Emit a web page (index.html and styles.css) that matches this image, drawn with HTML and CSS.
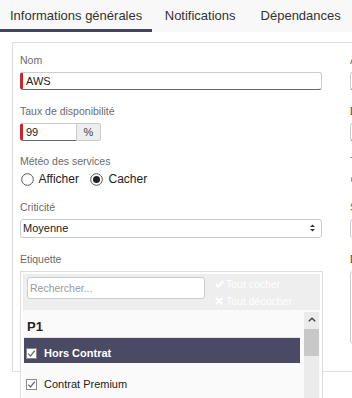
FILE: index.html
```html
<!DOCTYPE html>
<html lang="fr">
<head>
    <meta charset="UTF-8">
    <meta name="viewport" content="width=device-width, initial-scale=1.0">
    <title>Service - Informations générales</title>
    <link rel="stylesheet" href="styles.css">
</head>
<body>
    <div class="tabs">
        <a class="tab active">Informations générales</a>
        <a class="tab">Notifications</a>
        <a class="tab">Dépendances</a>
    </div>

    <div class="content">
        <div class="panel">
            <div class="col">
                <div class="field">
                    <label class="field-label">Nom</label>
                    <input type="text" class="input required" value="AWS">
                </div>
                <div class="field">
                    <label class="field-label">Taux de disponibilité</label>
                    <div class="input-group">
                        <input type="text" class="input required short" value="99">
                        <span class="addon">%</span>
                    </div>
                </div>
                <div class="field">
                    <label class="field-label">Météo des services</label>
                    <div class="radios">
                        <span class="radio">
                            <svg width="13" height="13" viewBox="0 0 13 13"><circle cx="6.5" cy="6.5" r="5.8" fill="#fff" stroke="#555" stroke-width="1"/></svg>
                            Afficher
                        </span>
                        <span class="radio">
                            <svg width="13" height="13" viewBox="0 0 13 13"><circle cx="6.5" cy="6.5" r="5.8" fill="#fff" stroke="#555" stroke-width="1"/><circle cx="6.5" cy="6.5" r="3.5" fill="#222"/></svg>
                            Cacher
                        </span>
                    </div>
                </div>
                <div class="field">
                    <label class="field-label">Criticité</label>
                    <div class="select">
                        <span>Moyenne</span>
                        <svg width="5" height="8" viewBox="0 0 5 8"><polygon points="0,3 2.5,0.5 5,3" fill="#333"/><polygon points="0,5 2.5,7.5 5,5" fill="#333"/></svg>
                    </div>
                </div>
                <div class="field last">
                    <label class="field-label">Etiquette</label>
                    <div class="multiselect">
                        <div class="ms-drop">
                            <div class="ms-header">
                                <input type="text" class="ms-search" placeholder="Rechercher...">
                                <div class="ms-actions">
                                    <span class="ms-action">
                                        <svg width="9" height="8" viewBox="0 0 9 8"><path d="M0.8 4.2 L3.2 6.6 L8.3 1" fill="none" stroke="#fff" stroke-width="2"/></svg>
                                        Tout cocher
                                    </span>
                                    <span class="ms-action">
                                        <svg width="9" height="8" viewBox="0 0 9 8"><path d="M1 0.8 L7.5 7.2 M7.5 0.8 L1 7.2" fill="none" stroke="#fff" stroke-width="2"/></svg>
                                        Tout décocher
                                    </span>
                                </div>
                            </div>
                            <div class="ms-list">
                                <div class="ms-items">
                                    <div class="ms-group">P1</div>
                                    <div class="ms-item selected">
                                        <svg width="11" height="11" viewBox="0 0 11 11"><rect x="0.5" y="0.5" width="10" height="10" fill="#fff" stroke="#8a8a8a"/><polyline points="2.2,5.6 4.5,8 8.8,2.6" fill="none" stroke="#6a6a6a" stroke-width="1.3"/></svg>
                                        Hors Contrat
                                    </div>
                                    <div class="ms-item">
                                        <svg width="11" height="11" viewBox="0 0 11 11"><rect x="0.5" y="0.5" width="10" height="10" fill="#fff" stroke="#8a8a8a"/><polyline points="2.2,5.6 4.5,8 8.8,2.6" fill="none" stroke="#6a6a6a" stroke-width="1.3"/></svg>
                                        Contrat Premium
                                    </div>
                                </div>
                                <div class="ms-scroll">
                                    <div class="ms-scroll-up">
                                        <svg width="8" height="5" viewBox="0 0 8 5"><polyline points="0.8,4.3 4,1.2 7.2,4.3" fill="none" stroke="#444" stroke-width="1.4"/></svg>
                                    </div>
                                    <div class="ms-thumb"></div>
                                </div>
                            </div>
                        </div>
                    </div>
                </div>
            </div>

            <div class="col">
                <div class="field">
                    <label class="field-label">Adresse</label>
                    <input type="text" class="input" value="">
                </div>
                <div class="field">
                    <label class="field-label dark">Durée de rétention</label>
                    <input type="text" class="input" value="">
                </div>
                <div class="field">
                    <label class="field-label">Type de service</label>
                    <div class="radios">
                        <span class="radio">
                            <svg width="13" height="13" viewBox="0 0 13 13"><circle cx="6.5" cy="6.5" r="5.8" fill="#fff" stroke="#555" stroke-width="1"/></svg>
                            Interne
                        </span>
                    </div>
                </div>
                <div class="field">
                    <label class="field-label">Statut</label>
                    <div class="select"><span></span></div>
                </div>
                <div class="field last">
                    <label class="field-label dark">Description</label>
                    <div class="textarea"></div>
                </div>
            </div>
        </div>
        <div class="panel-next"></div>
    </div>
</body>
</html>
```

FILE: styles.css
```css
html, body {
    overflow: hidden;
}
body {
    font-family: 'Liberation Sans', Arial, sans-serif;
    margin: 0;
    background-color: #fff;
    color: #333;
}
.tabs {
    display: flex;
    background-color: #f8f8f8;
    height: 32px;
}
.tab {
    padding: 2px 12.5px 0;
    line-height: 27px;
    font-size: 13px;
    color: #333;
    border-bottom: 3px solid transparent;
    white-space: nowrap;
}
.tab:first-child {
    padding-left: 10px;
    padding-right: 10px;
}
.tab.active {
    border-bottom-color: #44445c;
}
.content {
    padding-top: 10px;
}
.panel {
    margin-left: 12px;
    width: 680px;
    border: 1px solid #ddd;
    padding: 10px 7px 27px 7px;
    display: grid;
    grid-template-columns: 302px 302px;
    column-gap: 28px;
    align-items: start;
}
.field {
    margin-bottom: 13.5px;
}
.field.last {
    margin-bottom: 0;
}
.field-label {
    display: block;
    font-size: 10.5px;
    line-height: 15px;
    color: #6b6b6b;
    margin-bottom: 4px;
}
.field-label.dark {
    color: #444;
}
.input {
    display: block;
    box-sizing: border-box;
    width: 100%;
    height: 18px;
    margin: 0;
    padding: 0 3px;
    font-family: 'Liberation Sans', Arial, sans-serif;
    font-size: 11px;
    color: #222;
    border: 1px solid #ccc;
    border-bottom-color: #666;
    border-radius: 3px;
    outline: none;
}
.input.required {
    border-left: 3px solid #c9252c;
}
.input-group {
    display: flex;
}
.input.short {
    width: 57px;
    border-radius: 3px 0 0 3px;
}
.addon {
    box-sizing: border-box;
    width: 24px;
    height: 18px;
    background: #eee;
    border: 1px solid #ccc;
    border-left: none;
    border-radius: 0 3px 3px 0;
    font-size: 11px;
    line-height: 16px;
    text-align: center;
    color: #444;
}
.radios {
    display: flex;
    gap: 11px;
    height: 13px;
    font-size: 12px;
    line-height: 13px;
    color: #222;
}
.radio {
    display: flex;
    align-items: center;
    gap: 5px;
}
.radio svg {
    margin-left: 0.5px;
}
.select {
    box-sizing: border-box;
    height: 19.5px;
    border: 1px solid #ccc;
    border-radius: 3px;
    padding: 0 6px 0 2px;
    display: flex;
    align-items: center;
    justify-content: space-between;
    font-size: 11px;
    color: #222;
}
.textarea {
    box-sizing: border-box;
    height: 73px;
    border: 1px solid #ccc;
    border-radius: 3px;
}
.multiselect {
    position: relative;
    height: 20px;
}
.ms-drop {
    position: absolute;
    top: 0;
    left: 0;
    z-index: 10;
    box-sizing: border-box;
    width: 303px;
    height: 140px;
    border: 1px solid #ddd;
    padding: 2px;
    background: #fff;
    display: flex;
    flex-direction: column;
}
.ms-header {
    display: flex;
    align-items: flex-start;
    box-sizing: border-box;
    height: 36px;
    padding: 2px 4px 0;
    background: #eee;
}
.ms-search {
    box-sizing: border-box;
    width: 178px;
    height: 22px;
    margin: 1.5px 0 0;
    padding: 0 2px;
    border: 1px solid #ccc;
    border-radius: 3px;
    font-family: 'Liberation Sans', Arial, sans-serif;
    font-size: 10.5px;
    outline: none;
}
.ms-search::placeholder {
    color: #999;
}
.ms-actions {
    margin-left: 10px;
    font-size: 10.5px;
    line-height: 17px;
    color: #fff;
}
.ms-action {
    display: flex;
    align-items: center;
    gap: 2px;
}
.ms-list {
    flex: 1;
    display: flex;
    background: #fafafa;
    min-height: 0;
}
.ms-items {
    flex: 1;
    padding: 9.5px 4px 0 1px;
}
.ms-group {
    font-size: 13px;
    font-weight: bold;
    line-height: 16px;
    color: #222;
    padding: 0 0 2px 3px;
    border-bottom: 1px solid #e2e2e2;
}
.ms-item {
    display: flex;
    align-items: center;
    gap: 7px;
    box-sizing: border-box;
    height: 25px;
    padding: 9px 0 3px 2px;
    margin-bottom: 6px;
    font-size: 11px;
    line-height: 13px;
    color: #222;
}
.ms-item.selected {
    background: #4b4a64;
    color: #fff;
    font-weight: bold;
}
.ms-scroll {
    width: 15px;
    margin: 2.5px 1px 0 0;
    background: #ebebeb;
}
.ms-scroll-up {
    height: 17px;
    box-sizing: border-box;
    padding-top: 5px;
    display: flex;
    justify-content: center;
    align-items: flex-start;
}
.ms-thumb {
    height: 27px;
    background: #c8c8c8;
}
.panel-next {
    margin-top: 26px;
    border-top: 1px solid #ddd;
    height: 40px;
}
```
